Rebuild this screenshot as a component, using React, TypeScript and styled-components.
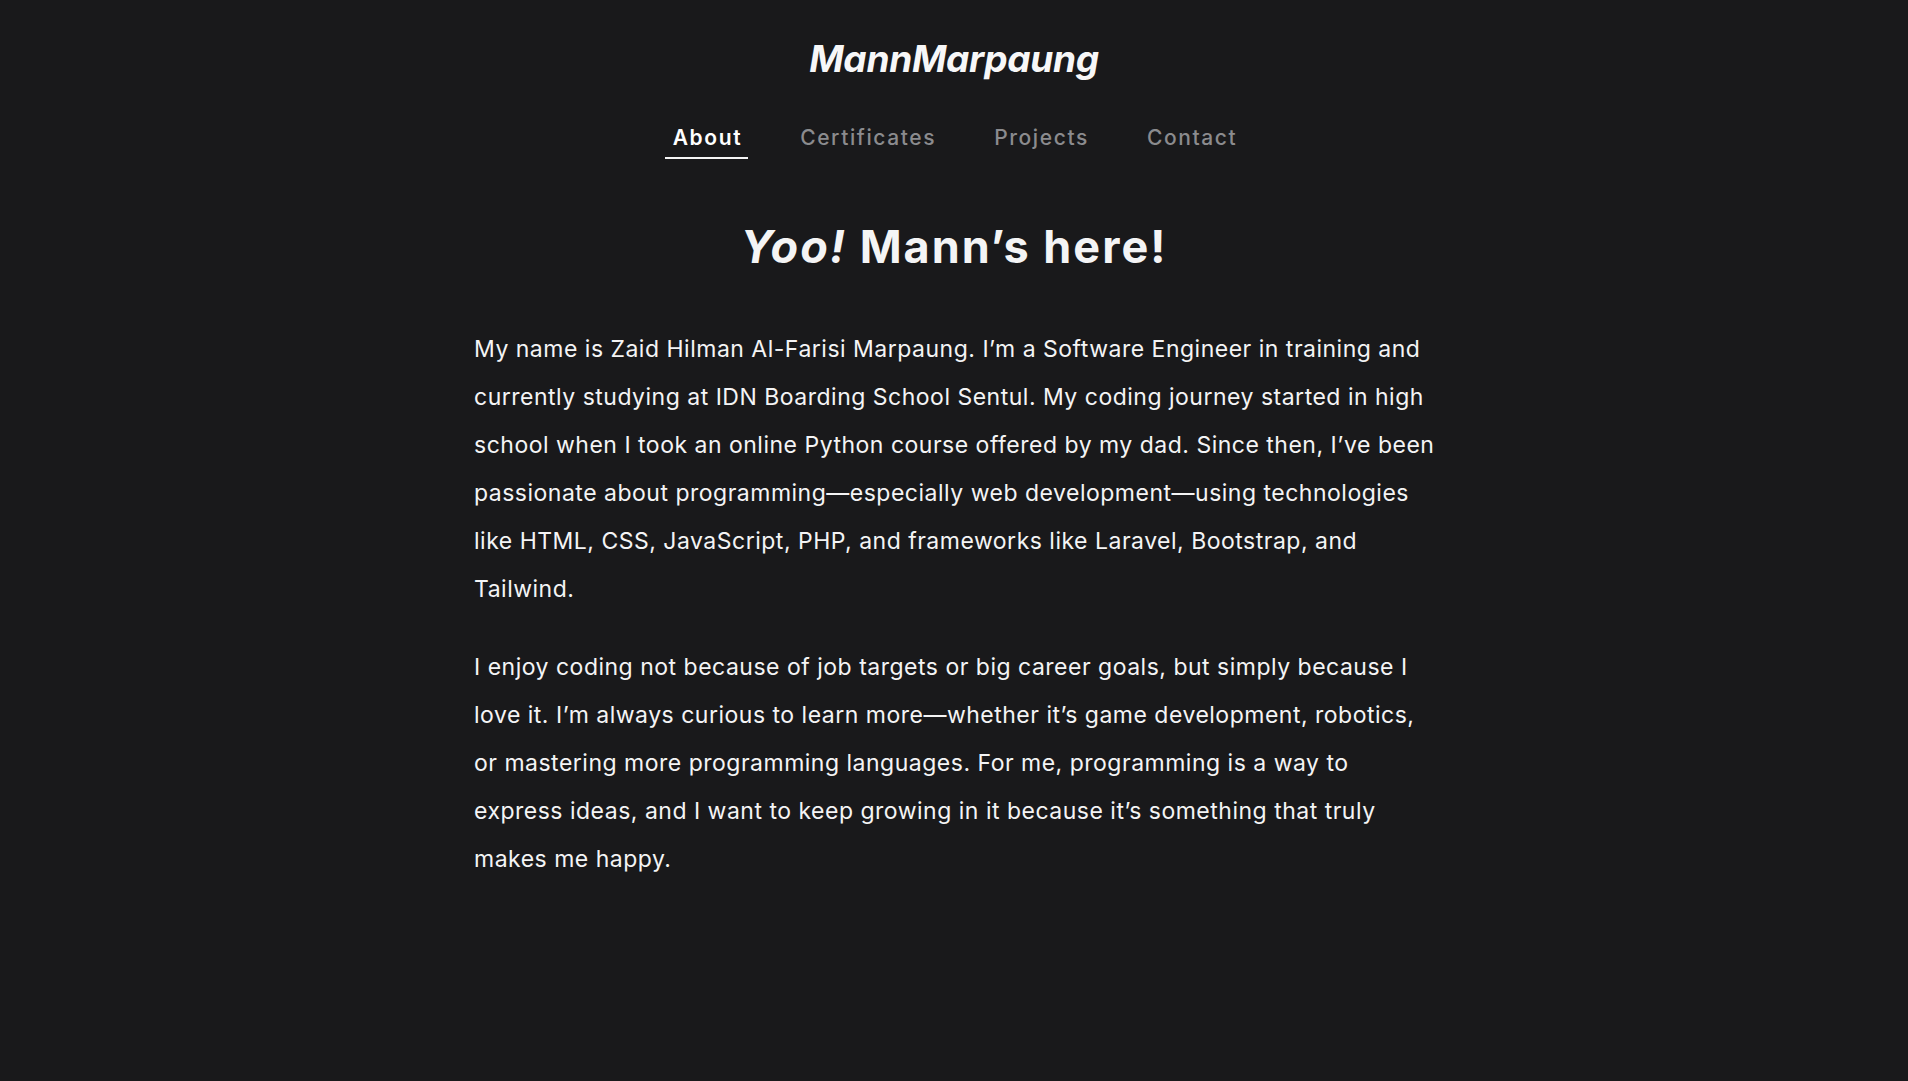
import React from "react";
import styled, { createGlobalStyle } from "styled-components";

const GlobalStyle = createGlobalStyle`
  html, body {
    margin: 0;
    padding: 0;
    background: #19191b;
  }
  body {
    font-family: Inter, "Noto Sans", sans-serif;
    color: #f4f4f5;
  }
`;

const Page = styled.div`
  min-height: 100vh;
  background: #19191b;
  display: flex;
  flex-direction: column;
  align-items: center;
`;

const Header = styled.header`
  padding-top: 37px;
  display: flex;
  flex-direction: column;
  align-items: center;
  width: 100%;
`;

const Logo = styled.div`
  font-size: 37px;
  line-height: 44px;
  font-weight: 700;
  font-style: italic;
  letter-spacing: -0.3px;
  color: #f7f7f8;
`;

const Nav = styled.nav`
  display: flex;
  align-items: flex-start;
  gap: 44px;
  margin-top: 41px;
`;

const NavLink = styled.a<{ $active?: boolean }>`
  display: block;
  font-size: 21px;
  line-height: 32px;
  letter-spacing: 1.6px;
  padding: 0 6px 3px 8px;
  font-weight: ${(p) => (p.$active ? 600 : 500)};
  color: ${(p) => (p.$active ? "#ffffff" : "#8b8b8e")};
  border-bottom: 2px solid ${(p) => (p.$active ? "#f4f4f5" : "transparent")};
  text-decoration: none;
  cursor: pointer;
`;

const Main = styled.main`
  width: 960px;
  margin-top: 60px;
  display: flex;
  flex-direction: column;
`;

const Title = styled.h1`
  margin: 0 0 50px;
  text-align: center;
  font-size: 45px;
  line-height: 56px;
  font-weight: 700;
  letter-spacing: 2px;
  color: #f4f4f5;
`;

const Em = styled.em`
  font-style: italic;
  font-weight: 700;
`;

const Paragraph = styled.p`
  margin: 0 0 30px;
  font-size: 23px;
  line-height: 48px;
  font-weight: 400;
  letter-spacing: 0.5px;
  white-space: nowrap;
  color: #f4f4f5;
`;

const para1 = [
  "My name is Zaid Hilman Al-Farisi Marpaung. I’m a Software Engineer in training and",
  "currently studying at IDN Boarding School Sentul. My coding journey started in high",
  "school when I took an online Python course offered by my dad. Since then, I’ve been",
  "passionate about programming—especially web development—using technologies",
  "like HTML, CSS, JavaScript, PHP, and frameworks like Laravel, Bootstrap, and",
  "Tailwind.",
];

const para2 = [
  "I enjoy coding not because of job targets or big career goals, but simply because I",
  "love it. I’m always curious to learn more—whether it’s game development, robotics,",
  "or mastering more programming languages. For me, programming is a way to",
  "express ideas, and I want to keep growing in it because it’s something that truly",
  "makes me happy.",
];

function Lines({ lines }: { lines: string[] }) {
  return (
    <>
      {lines.map((l, i) => (
        <React.Fragment key={i}>
          {l}
          {i < lines.length - 1 && <br />}
        </React.Fragment>
      ))}
    </>
  );
}

export default function App() {
  const items = ["About", "Certificates", "Projects", "Contact"];
  return (
    <>
      <GlobalStyle />
      <Page>
        <Header>
          <Logo>MannMarpaung</Logo>
          <Nav>
            {items.map((it, i) => (
              <NavLink key={it} $active={i === 0}>
                {it}
              </NavLink>
            ))}
          </Nav>
        </Header>
        <Main>
          <Title>
            <Em>Yoo!</Em> Mann’s here!
          </Title>
          <Paragraph>
            <Lines lines={para1} />
          </Paragraph>
          <Paragraph>
            <Lines lines={para2} />
          </Paragraph>
        </Main>
      </Page>
    </>
  );
}
